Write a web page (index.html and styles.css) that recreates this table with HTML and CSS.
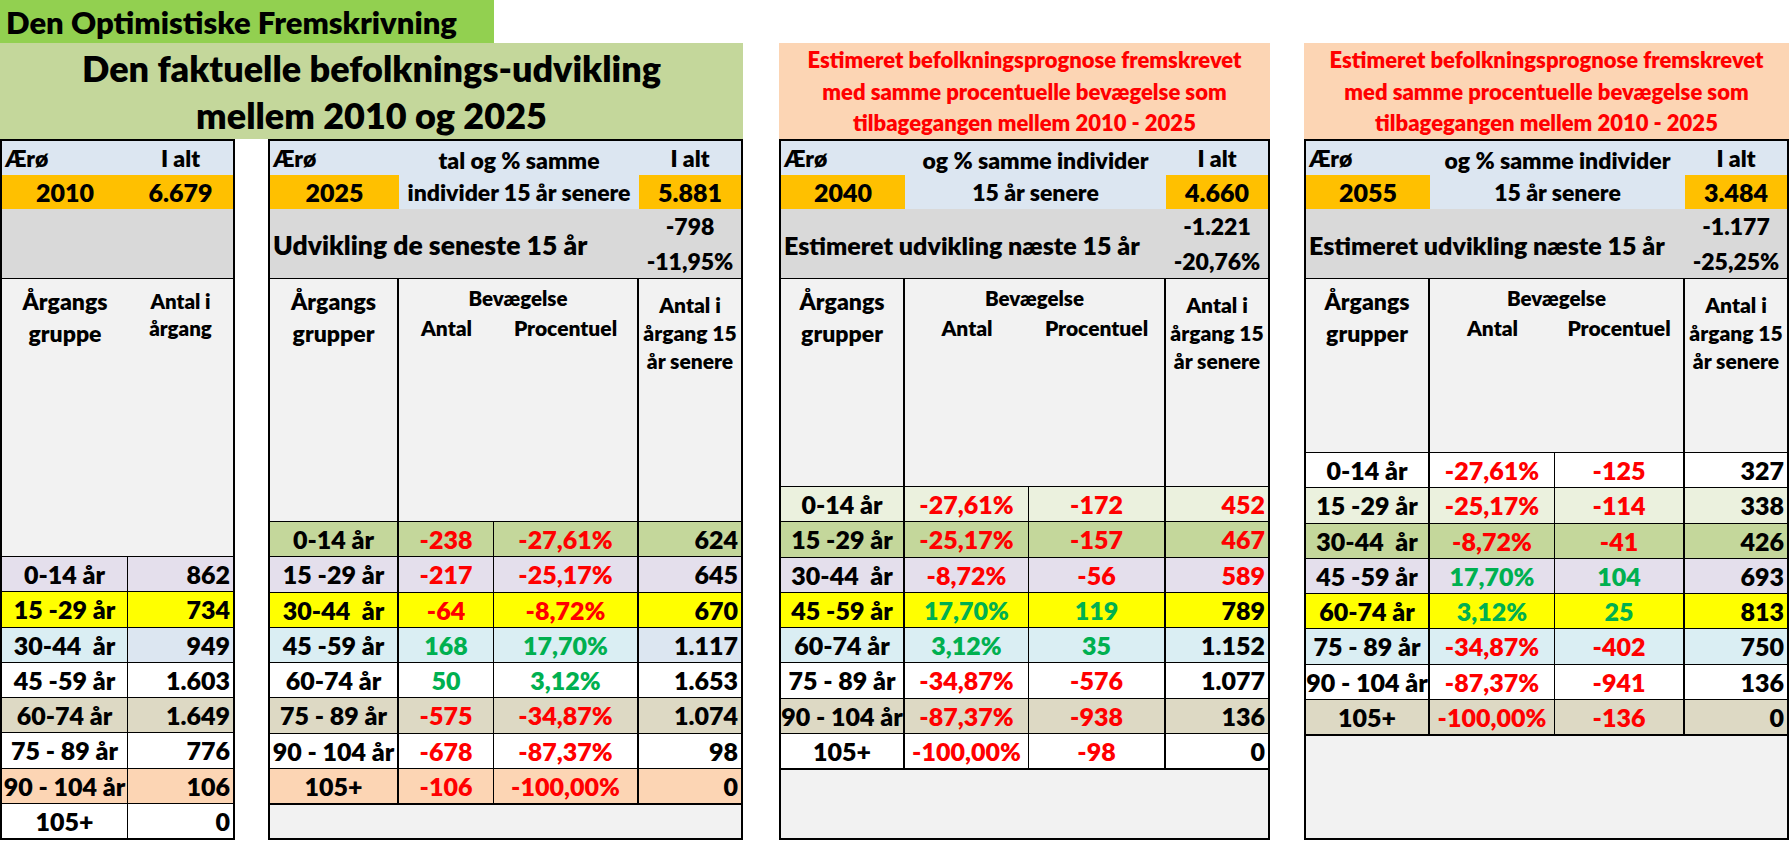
FILE: index.html
```html
<!DOCTYPE html>
<html lang="da">
<head>
<meta charset="utf-8">
<title>Den Optimistiske Fremskrivning</title>
<link rel="stylesheet" href="styles.css">
</head>
<body>
<div class="sheet">
  <div class="scenario">Den Optimistiske Fremskrivning</div>
  <div class="panels">
    <div class="group">
      <div class="title-green">Den faktuelle befolknings-udvikling<br>mellem 2010 og 2025</div>
      <div class="pair">
        <div class="tbl tbl1">
          <div class="c a left">Ærø</div>
          <div class="c a">I alt</div>
          <div class="c b orange">2010</div>
          <div class="c b orange">6.679</div>
          <div class="c gray spanall"></div>
          <div class="h hk1"><span>Årgangs</span><span>gruppe</span></div>
          <div class="h hs">Antal i<br>årgang</div>
          <div class="row lav"><div class="d k1">0-14 år</div><div class="d num">862</div></div>
          <div class="row yel"><div class="d k1">15 -29 år</div><div class="d num">734</div></div>
          <div class="row cyan blue-last"><div class="d k1">30-44&nbsp; år</div><div class="d num">949</div></div>
          <div class="row wht"><div class="d k1">45 -59 år</div><div class="d num">1.603</div></div>
          <div class="row tan"><div class="d k1">60-74 år</div><div class="d num">1.649</div></div>
          <div class="row wht"><div class="d k1">75 - 89 år</div><div class="d num">776</div></div>
          <div class="row peach"><div class="d k1">90 - 104 år</div><div class="d num">106</div></div>
          <div class="row wht"><div class="d k1">105+</div><div class="d num">0</div></div>
        </div>
        <div class="tbl tbl2">
          <div class="c a left">Ærø</div>
          <div class="c a span2 low">tal og % samme</div>
          <div class="c a">I alt</div>
          <div class="c b orange">2025</div>
          <div class="c b span2 sub">individer 15 år senere</div>
          <div class="c b orange">5.881</div>
          <div class="c gray span3 left big">Udvikling de seneste 15 år</div>
          <div class="c gray stack"><span>-798</span><span>-11,95%</span></div>
          <div class="h hk"><span>Årgangs</span><span>grupper</span></div>
          <div class="h hm span2"><span class="hm-top">Bevægelse</span><span class="hm-sub"><span>Antal</span><span>Procentuel</span></span></div>
          <div class="h hl">Antal i<br>årgang 15<br>år senere</div>
          <div class="row olive"><div class="d k">0-14 år</div><div class="d m neg">-238</div><div class="d m2 neg">-27,61%</div><div class="d num">624</div></div>
          <div class="row lav"><div class="d k">15 -29 år</div><div class="d m neg">-217</div><div class="d m2 neg">-25,17%</div><div class="d num">645</div></div>
          <div class="row yel"><div class="d k">30-44&nbsp; år</div><div class="d m neg">-64</div><div class="d m2 neg">-8,72%</div><div class="d num">670</div></div>
          <div class="row cyan blue-last"><div class="d k">45 -59 år</div><div class="d m pos">168</div><div class="d m2 pos">17,70%</div><div class="d num">1.117</div></div>
          <div class="row wht"><div class="d k">60-74 år</div><div class="d m pos">50</div><div class="d m2 pos">3,12%</div><div class="d num">1.653</div></div>
          <div class="row tan"><div class="d k">75 - 89 år</div><div class="d m neg">-575</div><div class="d m2 neg">-34,87%</div><div class="d num">1.074</div></div>
          <div class="row wht"><div class="d k">90 - 104 år</div><div class="d m neg">-678</div><div class="d m2 neg">-87,37%</div><div class="d num">98</div></div>
          <div class="row peach"><div class="d k">105+</div><div class="d m neg">-106</div><div class="d m2 neg">-100,00%</div><div class="d num">0</div></div>
          <div class="fill spanall"></div>
        </div>
      </div>
    </div>

    <div class="panel panel3">
      <div class="title-peach">Estimeret befolkningsprognose fremskrevet<br>med samme procentuelle bevægelse som<br>tilbagegangen mellem 2010 - 2025</div>
      <div class="tbl tbl3">
        <div class="c a left">Ærø</div>
        <div class="c a span2 low">og % samme individer</div>
        <div class="c a">I alt</div>
        <div class="c b orange">2040</div>
        <div class="c b span2 sub">15 år senere</div>
        <div class="c b orange">4.660</div>
        <div class="c gray span3 left mid">Estimeret udvikling næste 15 år</div>
        <div class="c gray stack"><span>-1.221</span><span>-20,76%</span></div>
        <div class="h hk"><span>Årgangs</span><span>grupper</span></div>
        <div class="h hm span2"><span class="hm-top">Bevægelse</span><span class="hm-sub"><span>Antal</span><span>Procentuel</span></span></div>
        <div class="h hl">Antal i<br>årgang 15<br>år senere</div>
        <div class="row pale"><div class="d k">0-14 år</div><div class="d m neg">-27,61%</div><div class="d m2 neg">-172</div><div class="d num neg">452</div></div>
        <div class="row olive"><div class="d k">15 -29 år</div><div class="d m neg">-25,17%</div><div class="d m2 neg">-157</div><div class="d num neg">467</div></div>
        <div class="row lav"><div class="d k">30-44&nbsp; år</div><div class="d m neg">-8,72%</div><div class="d m2 neg">-56</div><div class="d num neg">589</div></div>
        <div class="row yel"><div class="d k">45 -59 år</div><div class="d m pos">17,70%</div><div class="d m2 pos">119</div><div class="d num">789</div></div>
        <div class="row cyan"><div class="d k">60-74 år</div><div class="d m pos">3,12%</div><div class="d m2 pos">35</div><div class="d num">1.152</div></div>
        <div class="row wht"><div class="d k">75 - 89 år</div><div class="d m neg">-34,87%</div><div class="d m2 neg">-576</div><div class="d num">1.077</div></div>
        <div class="row tan"><div class="d k">90 - 104 år</div><div class="d m neg">-87,37%</div><div class="d m2 neg">-938</div><div class="d num">136</div></div>
        <div class="row wht"><div class="d k">105+</div><div class="d m neg">-100,00%</div><div class="d m2 neg">-98</div><div class="d num">0</div></div>
        <div class="fill spanall"></div>
      </div>
    </div>

    <div class="panel panel4">
      <div class="title-peach">Estimeret befolkningsprognose fremskrevet<br>med samme procentuelle bevægelse som<br>tilbagegangen mellem 2010 - 2025</div>
      <div class="tbl tbl4">
        <div class="c a left">Ærø</div>
        <div class="c a span2 low">og % samme individer</div>
        <div class="c a">I alt</div>
        <div class="c b orange">2055</div>
        <div class="c b span2 sub">15 år senere</div>
        <div class="c b orange">3.484</div>
        <div class="c gray span3 left mid">Estimeret udvikling næste 15 år</div>
        <div class="c gray stack"><span>-1.177</span><span>-25,25%</span></div>
        <div class="h hk"><span>Årgangs</span><span>grupper</span></div>
        <div class="h hm span2"><span class="hm-top">Bevægelse</span><span class="hm-sub"><span>Antal</span><span>Procentuel</span></span></div>
        <div class="h hl">Antal i<br>årgang 15<br>år senere</div>
        <div class="row wht"><div class="d k">0-14 år</div><div class="d m neg">-27,61%</div><div class="d m2 neg">-125</div><div class="d num">327</div></div>
        <div class="row pale"><div class="d k">15 -29 år</div><div class="d m neg">-25,17%</div><div class="d m2 neg">-114</div><div class="d num">338</div></div>
        <div class="row olive"><div class="d k">30-44&nbsp; år</div><div class="d m neg">-8,72%</div><div class="d m2 neg">-41</div><div class="d num">426</div></div>
        <div class="row lav"><div class="d k">45 -59 år</div><div class="d m pos">17,70%</div><div class="d m2 pos">104</div><div class="d num">693</div></div>
        <div class="row yel"><div class="d k">60-74 år</div><div class="d m pos">3,12%</div><div class="d m2 pos">25</div><div class="d num">813</div></div>
        <div class="row cyan"><div class="d k">75 - 89 år</div><div class="d m neg">-34,87%</div><div class="d m2 neg">-402</div><div class="d num">750</div></div>
        <div class="row wht"><div class="d k">90 - 104 år</div><div class="d m neg">-87,37%</div><div class="d m2 neg">-941</div><div class="d num">136</div></div>
        <div class="row tan"><div class="d k">105+</div><div class="d m neg">-100,00%</div><div class="d m2 neg">-136</div><div class="d num">0</div></div>
        <div class="fill spanall"></div>
      </div>
    </div>
  </div>
</div>
</body>
</html>
```

FILE: styles.css
```css
* { box-sizing: border-box; margin: 0; padding: 0; }

html, body { background: #fff; }

body {
  margin: 0;
  width: 1791px;
  height: 841px;
  overflow: hidden;
  font-family: Lato, "Open Sans", "Liberation Sans", sans-serif;
  font-weight: 800;
  color: #000;
}

.sheet { display: flex; flex-direction: column; }

.scenario {
  width: 494px;
  height: 43px;
  background: #92D050;
  font-size: 31px;
  line-height: 43px;
  padding: 1px 0 0 6px;
  white-space: nowrap;
}

.panels { display: flex; align-items: flex-start; }

.group { width: 743px; display: flex; flex-direction: column; }

.title-green {
  height: 96px;
  background: #C4D79B;
  font-size: 36px;
  line-height: 47px;
  padding-top: 2px;
  text-align: center;
  white-space: nowrap;
}

.pair { display: flex; gap: 33px; }

.panel { display: flex; flex-direction: column; }
.panel3 { width: 491px; margin-left: 36px; }
.panel4 { width: 485px; margin-left: 34px; }

.title-peach {
  height: 96px;
  background: #FCD5B4;
  color: #FF0000;
  font-size: 22px;
  line-height: 31.5px;
  text-align: center;
  white-space: nowrap;
  padding-top: 1px;
}

/* ---------- tables ---------- */
.tbl {
  height: 701px;
  border: 2px solid #000;
  display: grid;
  grid-template-rows: 34px 34px 70px var(--head) repeat(8, 35.25px) 1fr;
  font-size: 25px;
  white-space: nowrap;
}
.tbl1 { width: 235px; grid-template-columns: 126px 105px; --head: 277px; }
.tbl2 { width: 475px; grid-template-columns: 129px 95px 145px 102px; --head: 242px; }
.tbl3 { width: 491px; grid-template-columns: 124px 124px 137px 102px; --head: 207px; }
.tbl4 { width: 485px; grid-template-columns: 124px 125px 130px 102px; --head: 173px; }

.span2 { grid-column: span 2; }
.span3 { grid-column: span 3; }
.spanall { grid-column: 1 / -1; }

/* top rows */
.c {
  display: flex;
  align-items: center;
  justify-content: center;
  background: #DCE6F1;
}
.c.a { font-size: 23px; }
.c.b { font-size: 25px; }
.c.b.sub { font-size: 23px; }
.c.left { justify-content: flex-start; padding-left: 3px; }
.c.low { align-items: flex-end; line-height: 30px; }
.c.orange { background: #FFC000; }
.c.gray { background: #D9D9D9; border-bottom: 1px solid #000; font-size: 23px; }
.c.gray.big { font-size: 26.5px; padding-top: 2px; }
.c.gray.mid { font-size: 25px; padding-top: 2px; }
.c.stack { flex-direction: column; line-height: 34.5px; }

/* header area */
.h {
  background: #F2F2F2;
  display: flex;
  flex-direction: column;
  align-items: center;
  text-align: center;
}
.hk1, .hk { font-size: 23px; line-height: 32px; padding-top: 6px; }
.hk { border-right: 2px solid #000; }
.hs { font-size: 20.5px; line-height: 27px; padding-top: 9px; }
.hm { border-right: 2px solid #000; align-items: stretch; font-size: 20.5px; padding-top: 6px; }
.hm-top { line-height: 26px; }
.hm-sub { display: flex; line-height: 34px; font-size: 21px; }
.tbl2 .hm-sub > span:first-child { width: 95px; }
.tbl2 .hm-sub > span:last-child { width: 143px; }
.tbl3 .hm-sub > span:first-child { width: 124px; }
.tbl3 .hm-sub > span:last-child { width: 135px; }
.tbl4 .hm-sub > span:first-child { width: 125px; }
.tbl4 .hm-sub > span:last-child { width: 128px; }
.hl { font-size: 21px; line-height: 28px; padding-top: 12px; }

/* data rows */
.row { display: contents; }
.d {
  display: flex;
  align-items: center;
  justify-content: center;
  border-top: 1px solid #000;
}
.d.k1 { border-right: 1px solid #000; }
.d.k { border-right: 2px solid #000; }
.d.m { border-right: 1px solid #000; }
.d.m2 { border-right: 2px solid #000; }
.d.num { justify-content: flex-end; padding-right: 3px; }

.neg { color: #FF0000; }
.pos { color: #00B050; }

.lav > .d { background: #E4DFEC; }
.yel > .d { background: #FFFF00; }
.cyan > .d { background: #DAEEF3; }
.blue-last > .num { background: #DCE6F1; }
.wht > .d { background: #FFFFFF; }
.tan > .d { background: #DDD9C4; }
.peach > .d { background: #FCD5B4; }
.olive > .d { background: #C4D79B; }
.pale > .d { background: #EBF1DE; }

.fill { background: #F2F2F2; border-top: 2px solid #000; }
```
